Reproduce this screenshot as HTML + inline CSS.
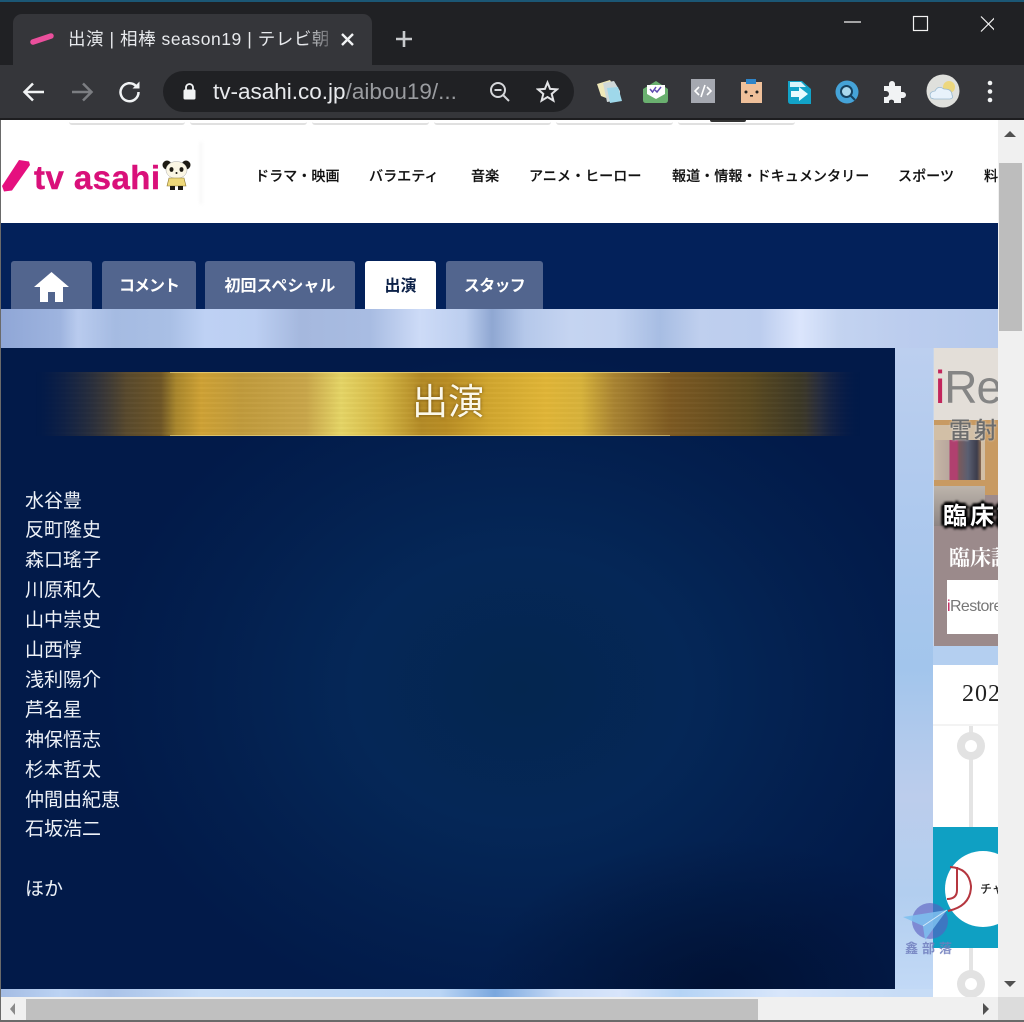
<!DOCTYPE html>
<html lang="ja"><head><meta charset="utf-8"><title>出演</title>
<style>
html,body{margin:0;padding:0;width:1024px;height:1022px;overflow:hidden;background:#fff}
body{position:relative;font-family:"Liberation Sans","Noto Sans CJK JP",sans-serif}
.a{position:absolute;display:block}
.t{position:absolute;white-space:nowrap}
.nav{position:absolute;top:165px;font-size:14.1px;line-height:22px;color:#111;font-weight:500;white-space:nowrap;-webkit-text-stroke:.15px #111}
.tab{position:absolute;top:261px;height:48px;background:#52658e;border-radius:3px 3px 0 0;color:#fff;font-weight:700;font-size:16px;line-height:52px;text-align:center}
</style></head><body>

<!-- browser chrome -->
<div class="a" style="left:0;top:0;width:1024px;height:65px;background:#202124"></div>
<div class="a" style="left:0;top:0;width:1024px;height:2px;background:#1b5775"></div>
<div class="a" style="left:0;top:65px;width:1024px;height:53px;background:#35363a"></div>
<div class="a" style="left:0;top:118px;width:1024px;height:2px;background:#1d1d1f"></div>
<div class="a" style="left:13px;top:14px;width:359px;height:51px;background:#35363a;border-radius:9px 9px 0 0"></div>
<svg class="a" style="left:28px;top:30px" width="28" height="18"><path d="M5 12L23 6" stroke="#ea4f9c" stroke-width="5.5" stroke-linecap="round"/></svg>
<div class="t" style="left:68px;top:27px;width:262px;overflow:hidden;font-size:17.5px;letter-spacing:.55px;line-height:25px;color:#e8eaed;-webkit-mask-image:linear-gradient(90deg,#000 90%,rgba(0,0,0,.25));mask-image:linear-gradient(90deg,#000 90%,rgba(0,0,0,.25))">出演 | 相棒 season19 | テレビ朝日</div>
<svg class="a" style="left:340px;top:32px" width="15" height="15"><path d="M2 2L13 13M13 2L2 13" stroke="#f1f3f4" stroke-width="2.4"/></svg>
<svg class="a" style="left:394px;top:29px" width="20" height="20"><path d="M10 2V18M2 10H18" stroke="#c8cacd" stroke-width="2.6"/></svg>
<svg class="a" style="left:844px;top:15px" width="150" height="18" fill="none" stroke="#f2f2f2" stroke-width="1.2"><path d="M0 7H17"/><rect x="69.5" y="1.5" width="14" height="14"/><path d="M137 1.5L152 16.5M152 1.5L137 16.5"/></svg>

<svg class="a" style="left:20px;top:78px" width="120" height="28" fill="none" stroke-width="2.5">
<path d="M24 14H5M13 5.5L4.5 14L13 22.5" stroke="#f1f3f4"/>
<path d="M52 14H71M63 5.5L71.5 14L63 22.5" stroke="#7c7e82"/>
<path d="M116 8A9 9 0 1 0 118.5 14" stroke="#f1f3f4"/><path d="M119.5 3.5V10.5H112.5Z" fill="#f1f3f4"/>
</svg>

<div class="a" style="left:163px;top:71px;width:411px;height:41px;background:#202124;border-radius:21px"></div>
<svg class="a" style="left:182px;top:82px" width="15" height="19"><path d="M4 8V5.5A3.5 3.5 0 0 1 11 5.5V8" stroke="#f1f3f4" stroke-width="1.8" fill="none"/><rect x="1.5" y="7.5" width="12" height="10" rx="1.5" fill="#f1f3f4"/></svg>
<div class="t" style="left:213px;top:77px;font-size:22.5px;line-height:30px;color:#e8eaed">tv-asahi.co.jp<span style="color:#9a9ca0">/aibou19/...</span></div>
<svg class="a" style="left:489px;top:81px" width="22" height="22" fill="none" stroke="#d5d7da" stroke-width="2"><circle cx="9" cy="9" r="7"/><path d="M5.5 9H12.5M14 14L20 20"/></svg>
<svg class="a" style="left:536px;top:80px" width="23" height="23"><path d="M11.5 2.5L14.1 8.9L21 9.4L15.7 13.9L17.4 20.6L11.5 17L5.6 20.6L7.3 13.9L2 9.4L8.9 8.9Z" fill="none" stroke="#e3e4e6" stroke-width="2"/></svg>

<!-- extension icons -->
<svg class="a" style="left:590px;top:74px" width="420" height="36">
<path d="M7 10L20 6L26 16L16 24L11 22Z" fill="#efe8b8"/><path d="M13 9L24 7L30 17V26L17 28Z" fill="#cfd8d8"/><path d="M17 14L28 13L32 27L20 29Z" fill="#9fd8ea"/>
<path d="M53 15L66 7L78 15V26Q78 29 75 29H56Q53 29 53 26Z" fill="#6ab06f"/><path d="M57 11H75V20L66 25L57 20Z" fill="#fff"/><path d="M60 15L62.5 18L66 13M65 16L67 18L71 13" stroke="#5f4bb0" stroke-width="1.5" fill="none"/>
<rect x="101" y="5" width="24" height="24" fill="#a5a8b0"/><path d="M109 13L105 17L109 21M117 13L121 17L117 21M115 11L111 23" stroke="#fff" stroke-width="1.6" fill="none"/>
<rect x="151" y="8" width="21" height="21" fill="#efc09a"/><rect x="156" y="5" width="10" height="5" fill="#2f85c8"/><circle cx="156" cy="18" r="1.5" fill="#222"/><circle cx="167" cy="18" r="1.5" fill="#222"/><rect x="160" y="21" width="3" height="1.6" fill="#222"/>
<path d="M198 7H212L221 15V30H201Q198 30 198 27Z" fill="#12a3c8"/><path d="M200 8H211L216 13H200Z" fill="#d8f4fb"/><path d="M201 17H209V13L218 20L209 27V23H201Z" fill="#e8fbff"/>
<circle cx="257" cy="18" r="11.5" fill="#45a3d8"/><circle cx="256.5" cy="17.5" r="5.5" fill="#a9d8ee" stroke="#16415f" stroke-width="2"/><path d="M261 22L265 26" stroke="#16415f" stroke-width="2"/>
<path d="M294 12H299V10A3 3 0 0 1 305 10V12H311V18H313A3 3 0 0 1 313 24H311V29H304V27A3 3 0 0 0 299 27V29H294V23H296A3 3 0 0 0 296 17H294Z" fill="#f1f3f4"/>
<circle cx="353" cy="17" r="16.5" fill="#dfe0dc"/><circle cx="359" cy="13" r="6" fill="#edd77e"/><path d="M341 24Q338 18 345 17Q348 11 354 15Q362 15 362 21Q364 24 360 25H344Z" fill="#e8f2fb" stroke="#9ab9d0" stroke-width=".8"/>
<circle cx="400" cy="9" r="2.3" fill="#f1f3f4"/><circle cx="400" cy="17.5" r="2.3" fill="#f1f3f4"/><circle cx="400" cy="26" r="2.3" fill="#f1f3f4"/>
</svg>

<!-- page top -->
<div class="a" style="left:0;top:120px;width:998px;height:103px;background:#fff"></div>
<div class="a" style="left:69px;top:120px;width:116px;height:3px;background:#fff;border-bottom:2px solid #e0e0e0;border-radius:0 0 3px 3px"></div>
<div class="a" style="left:190px;top:120px;width:117px;height:3px;background:#fff;border-bottom:2px solid #e0e0e0;border-radius:0 0 3px 3px"></div>
<div class="a" style="left:312px;top:120px;width:117px;height:3px;background:#fff;border-bottom:2px solid #e0e0e0;border-radius:0 0 3px 3px"></div>
<div class="a" style="left:434px;top:120px;width:117px;height:3px;background:#fff;border-bottom:2px solid #e0e0e0;border-radius:0 0 3px 3px"></div>
<div class="a" style="left:556px;top:120px;width:117px;height:3px;background:#fff;border-bottom:2px solid #e0e0e0;border-radius:0 0 3px 3px"></div>
<div class="a" style="left:678px;top:120px;width:117px;height:3px;background:#fff;border-bottom:2px solid #e0e0e0;border-radius:0 0 3px 3px"></div>
<div class="a" style="left:710px;top:120px;width:36px;height:2px;background:#333;border-radius:0 0 20px 20px"></div>

<div class="a" style="left:199px;top:142px;width:3px;height:62px;background:linear-gradient(90deg,#fff,#f0f0f0);filter:blur(1.5px)"></div>
<svg class="a" style="left:1px;top:158px" width="30" height="34"><path d="M18 2L28 3.5L29 7L11 32.5L3 33.5L1 28Z" fill="#e5107f"/></svg>
<div class="t" style="left:34px;top:158px;font-size:33px;line-height:40px;font-weight:700;color:#d9107a;letter-spacing:.45px;-webkit-text-stroke:.4px #d9107a">tv asahi</div>
<svg class="a" style="left:161px;top:159px" width="31" height="33">
<circle cx="6" cy="6" r="4.5" fill="#1d1a14"/><circle cx="25" cy="6" r="4.5" fill="#1d1a14"/>
<ellipse cx="15.5" cy="11" rx="10.5" ry="8.5" fill="#fbf6e4" stroke="#aaa" stroke-width=".5"/>
<ellipse cx="10.5" cy="10.5" rx="2" ry="2.4" fill="#1d1a14"/><ellipse cx="20.5" cy="10.5" rx="2" ry="2.4" fill="#1d1a14"/><circle cx="15.5" cy="14" r="1" fill="#1d1a14"/>
<path d="M8 19H23L25 27H6Z" fill="#eed879" stroke="#8a7632" stroke-width=".6"/>
<rect x="9" y="27" width="5" height="4" fill="#1d1a14"/><rect x="17" y="27" width="5" height="4" fill="#1d1a14"/>
</svg>
<div class="nav" style="left:255px">ドラマ・映画</div>
<div class="nav" style="left:369px">バラエティ</div>
<div class="nav" style="left:471px">音楽</div>
<div class="nav" style="left:529px">アニメ・ヒーロー</div>
<div class="nav" style="left:672px">報道・情報・ドキュメンタリー</div>
<div class="nav" style="left:898px">スポーツ</div>
<div class="nav" style="left:984px;width:14px;overflow:hidden">料理</div>

<!-- navy strip and tabs -->
<div class="a" style="left:0;top:223px;width:998px;height:86px;background:#03215a"></div>
<div class="tab" style="left:11px;width:81px"></div>
<svg class="a" style="left:34px;top:271px" width="35" height="32"><path d="M17.5 1L35 16H29V31H21V21H14V31H6V16H0Z" fill="#fff"/></svg>
<div class="tab" style="left:102px;width:94px;letter-spacing:-1px">コメント</div>
<div class="tab" style="left:205px;width:150px">初回スペシャル</div>
<div class="tab" style="left:365px;width:71px;background:#fff;color:#0c2148">出演</div>
<div class="tab" style="left:446px;width:97px;letter-spacing:-.7px">スタッフ</div>

<!-- patterned bg -->
<div class="a" style="left:0;top:309px;width:998px;height:688px;background:linear-gradient(90deg,#a9c4ea 0,#a8c4ec 895px,#b4cff0 934px)"></div>
<div class="a" style="left:0;top:309px;width:998px;height:39px;background:linear-gradient(90deg,#8fa6d6 0,#9eb4df 60px,#b9cbee 78px,#a5bbe2 115px,#a9bfe5 170px,#bed1f4 205px,#bccff2 255px,#a5b8de 300px,#a8bce2 370px,#cddbf7 420px,#bcceef 465px,#8fa7d2 492px,#b5c8ea 525px,#c5d4f1 570px,#c2d2f0 615px,#a7bde3 660px,#bfcfee 700px,#bccdee 760px,#dbe5fc 800px,#c3d3f0 840px,#bccdee 900px,#b5c9ec 998px)"></div>
<div class="a" style="left:0;top:989px;width:998px;height:8px;background:linear-gradient(90deg,#a3bbe3 0,#bcd3f3 60px,#a9c2e8 110px,#c6dcf7 200px,#bad5f5 440px,#7aa7de 495px,#c9dcf7 560px,#d8e5fb 620px,#b4d3f5 680px,#d8e6fb 780px,#c7dcf6 900px)"></div>
<div class="a" style="left:895px;top:348px;width:38px;height:641px;background:linear-gradient(180deg,#bccfef 0,#a9c7ed 35%,#a2c5ec 50%,#bccdec 70%,#b2ceef 85%,#c2d9f6 100%)"></div>

<!-- main panel -->
<div class="a" style="left:1px;top:348px;width:894px;height:641px;background:radial-gradient(ellipse 420px 340px at 520px 340px,#052757 0,#04264f 0,#052757 40%,#031f4e 75%,#021a49 100%),#021a49"></div>
<div class="a" style="left:1px;top:348px;width:894px;height:641px;background:radial-gradient(ellipse 240px 150px at 720px 641px,rgba(0,12,38,.6) 0,rgba(0,12,38,0) 100%)"></div>

<!-- gold title bar -->
<div class="a" style="left:36px;top:372px;width:830px;height:64px;-webkit-mask-image:linear-gradient(90deg,transparent 0,#000 90px,#000 770px,transparent 824px);mask-image:linear-gradient(90deg,transparent 0,#000 90px,#000 770px,transparent 824px);background:repeating-linear-gradient(180deg,rgba(255,255,255,.02) 0,rgba(255,255,255,.02) 2px,rgba(0,0,0,.02) 2px,rgba(0,0,0,.02) 5px),linear-gradient(90deg,#1c2340 0,#33333a 30px,#4f4330 75px,#6e5626 125px,#a8862c 140px,#cfa235 165px,#c19b3c 205px,#c9a64a 270px,#e5d566 305px,#d7b945 345px,#b48b26 385px,#b98d24 410px,#d2a72f 455px,#e1b637 510px,#d8b33b 545px,#a98432 578px,#7d5a22 634px,#5c4a20 714px,#3c3826 764px,#33333a 784px,#1c2440 804px,#021a49 824px)"></div>
<div class="a" style="left:170px;top:372px;width:500px;height:1px;background:rgba(240,225,150,.55)"></div>
<div class="a" style="left:170px;top:435px;width:500px;height:1px;background:rgba(240,225,150,.55)"></div>
<div class="t" style="left:412px;top:377px;font-size:36px;line-height:50px;color:#fbf8ea;text-shadow:0 0 3px rgba(80,50,0,.7)">出演</div>

<!-- cast list -->
<div class="a" style="left:25px;top:486.5px;font-size:19px;line-height:29.9px;color:#eef2f8;white-space:nowrap">水谷豊<br>反町隆史<br>森口瑤子<br>川原和久<br>山中崇史<br>山西惇<br>浅利陽介<br>芦名星<br>神保悟志<br>杉本哲太<br>仲間由紀恵<br>石坂浩二<br><br>ほか</div>

<!-- right column ad -->
<div class="a" style="left:933px;top:348px;width:65px;height:298px;background:#9d8b8c;overflow:hidden;border-left:1px solid #c7d5ea;box-sizing:border-box">
 <div class="a" style="left:0;top:0;width:65px;height:75px;background:#e3ded8"></div>
 <div class="a" style="left:0;top:75px;width:65px;height:60px;background:#d2bfa6"></div>
 <div class="a" style="left:0;top:72px;width:65px;height:5px;background:#c89a62"></div>
 <div class="a" style="left:51px;top:75px;width:14px;height:72px;background:#c89a62"></div>
 <div class="a" style="left:1px;top:92px;width:46px;height:40px;background:linear-gradient(90deg,#c6b5a5 0,#b8a79d 14px,#b0406f 15px,#b0406f 22px,#7a5a5c 24px,#5a5f72 33px,#3c3d4c 42px,#8a6a50 46px)"></div>
 <div class="a" style="left:0;top:132px;width:51px;height:6px;background:#c89a62"></div>
 <div class="a" style="left:0;top:138px;width:51px;height:40px;background:linear-gradient(180deg,#bdb5ac,#8d8482)"></div>
 <div class="a" style="left:0;top:178px;width:65px;height:120px;background:#9b8a8b"></div>
 <div class="t" style="left:1px;top:14px;font-size:46px;line-height:50px;font-weight:400;color:#858585;letter-spacing:-1px"><span style="color:#c2255c">i</span>Re</div>
 <div class="t" style="left:15px;top:67px;font-size:23px;line-height:30px;color:#6c6c6c;font-weight:500;letter-spacing:2px;text-shadow:0 0 2px #ddd">雷射</div>
 <div class="t" style="left:9px;top:154px;font-size:24px;line-height:30px;font-weight:700;color:#fff;letter-spacing:3px;text-shadow:0 0 3px #000,0 0 3px #000,0 0 3px #000,0 0 4px #000,3px 0 2px #000,-3px 0 2px #000,0 3px 2px #000,0 -3px 2px #000">臨床試</div>
 <div class="t" style="left:15px;top:195px;font-size:21px;line-height:30px;color:#fff;font-family:'Liberation Serif','Noto Serif CJK SC',serif;font-weight:700">臨床試</div>
 <div class="a" style="left:13px;top:232px;width:52px;height:54px;background:#fff"></div>
 <div class="t" style="left:13px;top:249px;font-size:16px;line-height:20px;color:#777;letter-spacing:-.6px"><span style="color:#c2255c">i</span>Restore</div>
</div>

<!-- right column card -->
<div class="a" style="left:933px;top:665px;width:65px;height:332px;background:#fff;overflow:hidden">
 <div class="t" style="left:29px;top:14px;font-family:'Liberation Serif',serif;font-size:24px;line-height:30px;color:#222;letter-spacing:1px">2021</div>
 <div class="a" style="left:0;top:59px;width:65px;height:2px;background:#f3f3f3"></div>
 <div class="a" style="left:36px;top:61px;width:4px;height:101px;background:#e4e4e4"></div>
 <div class="a" style="left:24px;top:67px;width:28px;height:28px;border-radius:50%;background:#e2e2e2"></div>
 <div class="a" style="left:32px;top:75px;width:12px;height:12px;border-radius:50%;background:#fff"></div>
 <div class="a" style="left:36px;top:283px;width:4px;height:50px;background:#e4e4e4"></div>
 <div class="a" style="left:24px;top:305px;width:28px;height:28px;border-radius:50%;background:#e2e2e2"></div>
 <div class="a" style="left:32px;top:313px;width:12px;height:12px;border-radius:50%;background:#fff"></div>
 <div class="a" style="left:0;top:162px;width:65px;height:121px;background:#0fa0c3;overflow:hidden">
  <div class="a" style="left:12px;top:24px;width:76px;height:76px;border-radius:50%;background:#fff"></div>
  <svg class="a" style="left:13px;top:38px" width="30" height="50" fill="none" stroke="#b5363f" stroke-width="2"><path d="M4 2Q23 3 25 21Q25 41 2 46"/><path d="M11 2V25Q11 34 1 34"/></svg>
  <div class="t" style="left:47px;top:55px;font-size:12px;line-height:14px;font-weight:500;color:#222">チャ</div>
 </div>
</div>

<!-- watermark -->
<svg class="a" style="left:902px;top:898px" width="56" height="62">
 <circle cx="28" cy="23" r="18" fill="#5a5ec0" opacity=".62"/>
 <path d="M1 19L45 12L23 42L21 28Z" fill="#7cc0ee" opacity=".85"/>
 <path d="M21 28L45 12" stroke="#d3e8f8" stroke-width="1" fill="none"/>
</svg>
<div class="t" style="left:905px;top:940px;font-size:13px;line-height:18px;font-weight:700;color:#6f7dbd;letter-spacing:4px;opacity:.85">鑫部落</div>

<!-- scrollbars -->
<div class="a" style="left:998px;top:120px;width:26px;height:902px;background:#f0f0f0"></div>
<div class="a" style="left:999px;top:163px;width:23px;height:168px;background:#bdbdbd"></div>
<svg class="a" style="left:1003px;top:129px" width="14" height="9"><path d="M1 8L7 2L13 8Z" fill="#505050"/></svg>
<svg class="a" style="left:1003px;top:980px" width="14" height="9"><path d="M1 1L7 7L13 1Z" fill="#505050"/></svg>
<div class="a" style="left:0;top:997px;width:998px;height:23px;background:#f0f0f0"></div>
<div class="a" style="left:26px;top:999px;width:732px;height:21px;background:#c0c0c0"></div>
<div class="a" style="left:998px;top:997px;width:26px;height:23px;background:#dcdcdc"></div>
<svg class="a" style="left:8px;top:1002px" width="9" height="14"><path d="M7 1L2 7L7 13Z" fill="#8a8a8a"/></svg>
<svg class="a" style="left:982px;top:1002px" width="9" height="14"><path d="M1 1L7 7L1 13Z" fill="#505050"/></svg>
<div class="a" style="left:0;top:1020px;width:1024px;height:2px;background:#6a6a6a"></div>
<div class="a" style="left:0;top:120px;width:1px;height:902px;background:#6a6a6a"></div>
</body></html>
